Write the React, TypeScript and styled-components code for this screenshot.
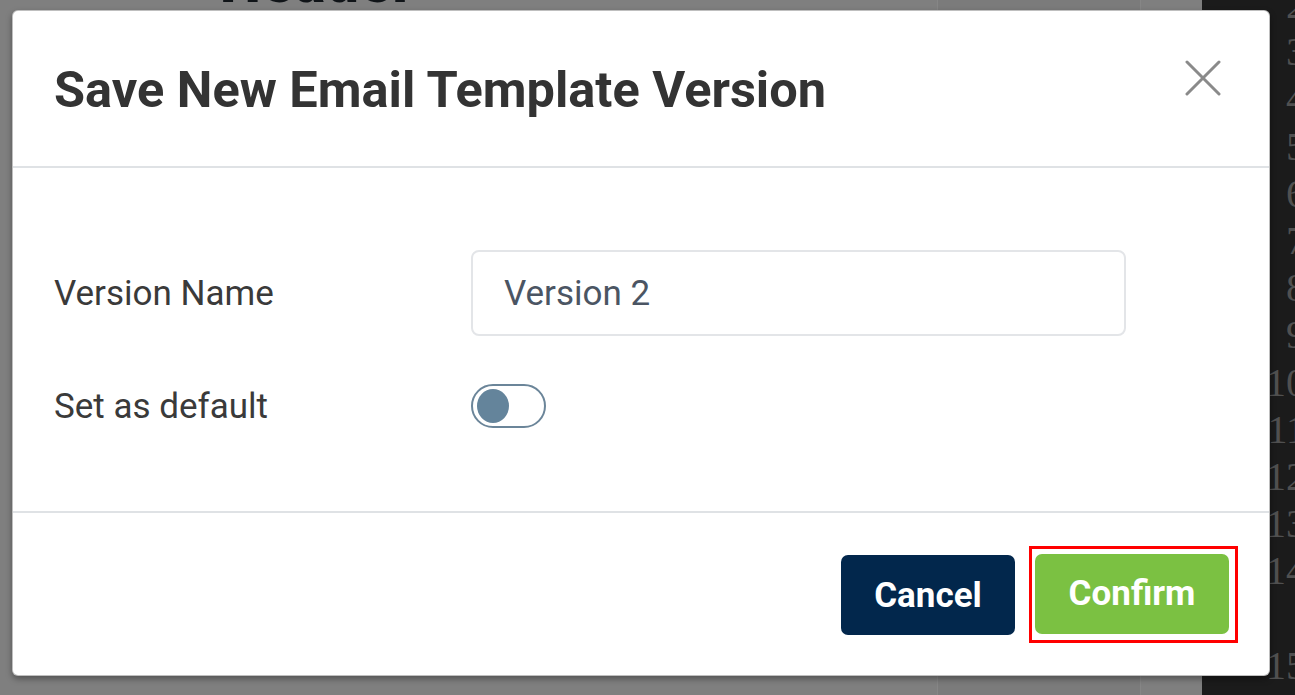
import React from "react";
import styled, { createGlobalStyle } from "styled-components";

const Global = createGlobalStyle`
  html, body { margin: 0; padding: 0; }
  body {
    width: 1295px;
    height: 695px;
    overflow: hidden;
    font-family: Roboto, "Liberation Sans", sans-serif;
  }
  * { box-sizing: border-box; }
`;

const Page = styled.div`
  position: relative;
  width: 1295px;
  height: 695px;
  display: flex;
  overflow: hidden;
  background: #7f7f7f;
`;

const MainArea = styled.div`
  flex: 1;
  display: grid;
  grid-template-columns: 937px 203px 1fr;
  height: 100%;
`;

const Column = styled.div<{ $shade: string; $divider?: boolean }>`
  background: ${(p) => p.$shade};
  border-left: ${(p) => (p.$divider ? "1px solid #868686" : "none")};
  position: relative;
  overflow: hidden;
`;

const PageHeading = styled.h1`
  margin: 0;
  position: absolute;
  left: 220px;
  top: -52px;
  font-family: Roboto, "Liberation Sans", sans-serif;
  font-size: 58px;
  font-weight: 900;
  color: #101418;
  letter-spacing: 1px;
`;

const Editor = styled.div`
  width: 93px;
  height: 100%;
  background: #1b1b1b;
  overflow: hidden;
`;

const Gutter = styled.div`
  width: 104px;
  margin-top: -19px;
  display: flex;
  flex-direction: column;
  align-items: flex-end;
`;

const LineNo = styled.div`
  font-family: "Liberation Serif", serif;
  font-size: 40px;
  line-height: 47.2px;
  height: 47.2px;
  color: #505050;
`;

const Modal = styled.div`
  position: absolute;
  left: 12px;
  top: 10px;
  width: 1258px;
  height: 666px;
  background: #ffffff;
  border-radius: 6px;
  border: 1px solid rgba(0, 0, 0, 0.25);
  box-shadow: 0 3px 6px rgba(0, 0, 0, 0.35);
  display: flex;
  flex-direction: column;
`;

const Header = styled.div`
  height: 157px;
  display: flex;
  align-items: center;
  justify-content: space-between;
  padding: 0 44px 0 41px;
  border-bottom: 2px solid #dfe2e5;
`;

const Title = styled.h2`
  margin: 0;
  font-family: Roboto, "Liberation Sans", sans-serif;
  font-size: 50.5px;
  font-weight: 700;
  color: #333333;
  padding-top: 2px;
`;

const CloseButton = styled.button`
  width: 44px;
  height: 44px;
  border: none;
  background: transparent;
  padding: 0;
  display: flex;
  align-items: center;
  justify-content: center;
  cursor: pointer;
  margin-top: -22px;
`;

const Body = styled.div`
  flex: 1;
  padding: 82px 41px 0 41px;
  border-bottom: 2px solid #dfe2e5;
`;

const Form = styled.div`
  display: grid;
  grid-template-columns: 417px 655px;
  grid-template-rows: 86px 44px;
  row-gap: 48px;
  align-items: center;
`;

const Label = styled.label`
  font-family: Roboto, "Liberation Sans", sans-serif;
  font-size: 35px;
  color: #3a3a3a;
`;

const Input = styled.input`
  width: 655px;
  height: 86px;
  border: 2px solid #e3e5e8;
  border-radius: 8px;
  padding: 0 31px;
  font-family: Roboto, "Liberation Sans", sans-serif;
  font-size: 35px;
  color: #4b5563;
  outline: none;
  background: #fff;
`;

const Switch = styled.div`
  width: 75px;
  height: 44px;
  border: 2px solid #6b8599;
  border-radius: 22px;
  padding: 4px;
  display: flex;
  align-items: center;
`;

const Knob = styled.div`
  width: 32px;
  height: 34px;
  border-radius: 50%;
  background: #64849b;
`;

const Footer = styled.div`
  height: 162px;
  display: flex;
  align-items: center;
  justify-content: flex-end;
  gap: 14px;
  padding: 0 31px 0 41px;
`;

const Highlight = styled.div`
  border: 3px solid #ff0000;
  padding: 5px 6px 6px 3px;
  display: flex;
`;

const Button = styled.button<{ $variant: "cancel" | "confirm" }>`
  height: 80px;
  width: ${(p) => (p.$variant === "cancel" ? "174px" : "194px")};
  border: none;
  border-radius: 7px;
  background: ${(p) => (p.$variant === "cancel" ? "#02274c" : "#7bc142")};
  color: #ffffff;
  font-family: Roboto, "Liberation Sans", sans-serif;
  font-size: 35px;
  font-weight: 700;
  cursor: pointer;
  margin-top: ${(p) => (p.$variant === "cancel" ? "2px" : "0")};
`;

const lineNumbers = [2, 3, 4, 5, 6, 7, 8, 9, 10, 11, 12, 13, 14, "", 15];

export default function App() {
  return (
    <>
      <Global />
      <Page>
        <MainArea>
          <Column $shade="#7f7f7f">
            <PageHeading>Header</PageHeading>
          </Column>
          <Column $shade="#7b7b7b" $divider />
          <Column $shade="#7f7f7f" $divider />
        </MainArea>
        <Editor>
          <Gutter>
            {lineNumbers.map((n, i) => (
              <LineNo key={i}>{n}</LineNo>
            ))}
          </Gutter>
        </Editor>
        <Modal>
          <Header>
            <Title>Save New Email Template Version</Title>
            <CloseButton aria-label="Close">
              <svg width="36" height="36" viewBox="0 0 36 36">
                <path
                  d="M2 2 L34 34 M34 2 L2 34"
                  stroke="#8a8a8a"
                  strokeWidth="3"
                  strokeLinecap="round"
                />
              </svg>
            </CloseButton>
          </Header>
          <Body>
            <Form>
              <Label>Version Name</Label>
              <Input defaultValue="Version 2" />
              <Label>Set as default</Label>
              <Switch>
                <Knob />
              </Switch>
            </Form>
          </Body>
          <Footer>
            <Button $variant="cancel">Cancel</Button>
            <Highlight>
              <Button $variant="confirm">Confirm</Button>
            </Highlight>
          </Footer>
        </Modal>
      </Page>
    </>
  );
}
